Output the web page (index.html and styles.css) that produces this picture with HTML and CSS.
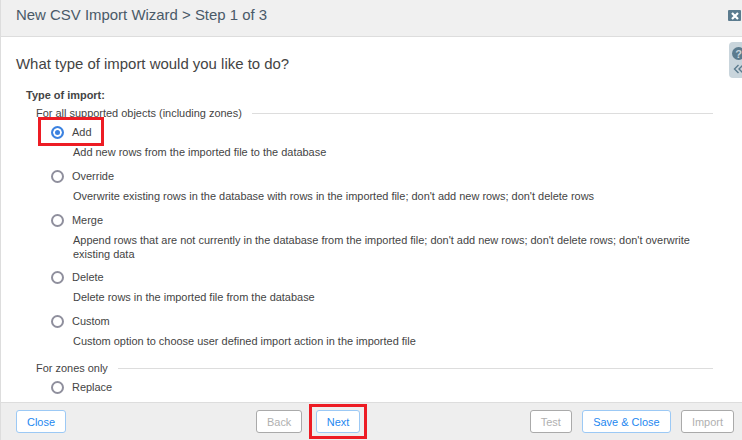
FILE: index.html
```html
<!DOCTYPE html>
<html lang="en">
<head>
    <meta charset="UTF-8">
    <title>New CSV Import Wizard</title>
    <link rel="stylesheet" href="styles.css">
</head>
<body>
    <div class="dialog">
        <div class="dialog-header">
            <span class="dialog-title">New CSV Import Wizard &gt; Step 1 of 3</span>
            <span class="close-icon">
                <svg width="8" height="8" viewBox="0 0 8 8"><path d="M1 1L7 7M7 1L1 7" stroke="#fff" stroke-width="2.2"/></svg>
            </span>
        </div>

        <div class="dialog-body">
            <div class="help-tab">
                <svg width="13" height="13" viewBox="0 0 13 13"><circle cx="6.5" cy="6.5" r="6.5" fill="#5b7b8e"/><text x="6.5" y="10.5" text-anchor="middle" class="help-mark">?</text></svg>
                <svg class="collapse-icon" width="12" height="10" viewBox="0 0 12 10"><path d="M5.5 1L1.5 5L5.5 9M10 1L6 5L10 9" fill="none" stroke="#5b7b8e" stroke-width="1.4"/></svg>
            </div>

            <h2 class="question">What type of import would you like to do?</h2>
            <div class="field-label">Type of import:</div>

            <div class="group-title first"><span>For all supported objects (including zones)</span></div>

            <div class="option first-option">
                <span class="radio checked"></span><span class="option-name">Add</span>
                <span class="highlight add-box"></span>
            </div>
            <div class="option-help">Add new rows from the imported file to the database</div>

            <div class="option">
                <span class="radio"></span><span class="option-name">Override</span>
            </div>
            <div class="option-help">Overwrite existing rows in the database with rows in the imported file; don't add new rows; don't delete rows</div>

            <div class="option">
                <span class="radio"></span><span class="option-name">Merge</span>
            </div>
            <div class="option-help two-line">Append rows that are not currently in the database from the imported file; don't add new rows; don't delete rows; don't overwrite existing data</div>

            <div class="option">
                <span class="radio"></span><span class="option-name">Delete</span>
            </div>
            <div class="option-help">Delete rows in the imported file from the database</div>

            <div class="option">
                <span class="radio"></span><span class="option-name">Custom</span>
            </div>
            <div class="option-help">Custom option to choose user defined import action in the imported file</div>

            <div class="group-title"><span>For zones only</span></div>

            <div class="option first-option">
                <span class="radio"></span><span class="option-name">Replace</span>
            </div>
        </div>

        <div class="dialog-footer">
            <div class="footer-left">
                <button type="button" class="btn">Close</button>
            </div>
            <div class="footer-center">
                <button type="button" class="btn" disabled>Back</button>
                <span class="next-wrap">
                    <button type="button" class="btn">Next</button>
                    <span class="highlight next-box"></span>
                </span>
            </div>
            <div class="footer-right">
                <button type="button" class="btn" disabled>Test</button>
                <button type="button" class="btn">Save &amp; Close</button>
                <button type="button" class="btn" disabled>Import</button>
            </div>
        </div>
    </div>
</body>
</html>
```

FILE: styles.css
```css
html, body {
    height: 100%;
}

body {
    margin: 0;
    font-family: "Liberation Sans", Arial, sans-serif;
    font-size: 10.96px;
    color: #444;
    background-color: #fff;
    overflow: hidden;
}

.dialog {
    height: 440px;
    display: flex;
    flex-direction: column;
    border-left: 1px solid #ddd;
    box-sizing: border-box;
}

.dialog-header {
    height: 37px;
    flex-shrink: 0;
    box-sizing: border-box;
    display: flex;
    align-items: center;
    justify-content: space-between;
    padding: 0 1px 8px 15px;
    background-color: #f0f0f0;
    border-bottom: 1px solid #ddd;
}

.dialog-title {
    font-size: 14.95px;
    color: #4a5a68;
}

.close-icon {
    width: 13px;
    height: 11px;
    margin-top: 3px;
    display: flex;
    align-items: center;
    justify-content: center;
    background-color: #5b7b8e;
    border-radius: 1px;
}

.dialog-body {
    flex: 1;
    position: relative;
    overflow: hidden;
    padding: 0 29px 0 15px;
}

.help-tab {
    position: absolute;
    top: 5px;
    right: 0;
    width: 13px;
    height: 36px;
    padding: 5px 0 0 3px;
    box-sizing: border-box;
    background-color: #c9d5dc;
    border-radius: 4px 0 0 4px;
    overflow: hidden;
    display: flex;
    flex-direction: column;
    gap: 4px;
}

.help-tab svg {
    flex-shrink: 0;
}

.collapse-icon {
    margin-left: 1px;
}

.help-mark {
    font-size: 11px;
    font-weight: bold;
    fill: #c9d5dc;
}

.question {
    margin: 17px 0 0;
    font-size: 14.95px;
    line-height: 20px;
    font-weight: normal;
    color: #444;
}

.field-label {
    margin: 14px 0 0 10px;
    font-weight: bold;
    line-height: 14px;
}

.group-title {
    margin: 4px 0 0 20px;
    display: flex;
    align-items: center;
    gap: 10px;
    line-height: 14px;
}

.group-title::after {
    content: "";
    flex: 1;
    height: 1px;
    background-color: #ddd;
}

.group-title:not(.first) {
    margin-top: 13px;
}

.option {
    margin: 10px 0 0 35px;
    display: flex;
    align-items: flex-start;
    gap: 8px;
    line-height: 14px;
    position: relative;
}

.option.first-option {
    margin-top: 5px;
}

.radio {
    width: 13px;
    height: 13px;
    margin-top: 1px;
    box-sizing: border-box;
    border: 2px solid #8f8f9d;
    border-radius: 50%;
    background-color: #fff;
    flex-shrink: 0;
}

.radio.checked {
    border-color: #3b82e0;
    background-color: #3b82e0;
    box-shadow: inset 0 0 0 2px #fff;
}

.option-help {
    margin: 6px 0 0 57px;
    line-height: 14px;
}

.option-help.two-line {
    margin-bottom: -1px;
}

.highlight {
    position: absolute;
    box-sizing: border-box;
    border: 3px solid #ed1c24;
    pointer-events: none;
}

.add-box {
    left: -13px;
    top: -8px;
    width: 66px;
    height: 29px;
}

.dialog-footer {
    height: 38px;
    flex-shrink: 0;
    box-sizing: border-box;
    display: flex;
    align-items: center;
    padding: 0 8px 0 15px;
    background-color: #eee;
    border-top: 1px solid #ddd;
}

.footer-left {
    width: 240px;
}

.footer-center {
    display: flex;
    gap: 13.5px;
}

.footer-right {
    margin-left: auto;
    display: flex;
    gap: 10.4px;
}

.btn {
    height: 23px;
    padding: 0 10px;
    font-family: inherit;
    font-size: 10.96px;
    color: #1e87f0;
    background-color: #fff;
    border: 1px solid #9cc9f5;
    border-radius: 3px;
}

.btn:disabled {
    color: #b0b0b0;
    border-color: #aaa;
}

.next-wrap {
    position: relative;
    display: flex;
}

.next-box {
    left: -7px;
    top: -6px;
    bottom: -6px;
    right: -7px;
}
```
